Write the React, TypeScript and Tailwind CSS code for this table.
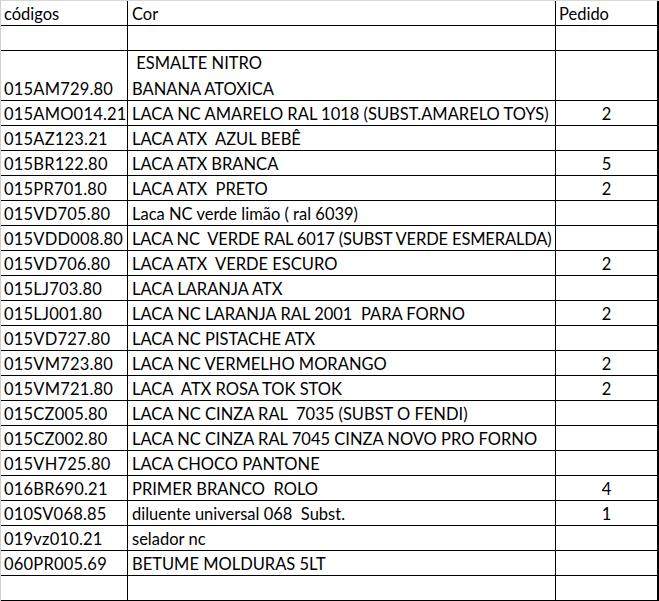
import React from "react";

type Row = { c: string; d: React.ReactNode; p?: string; h?: string; t?: string };

const rows: Row[] = [
  { c: "", d: "" },
  {
    c: "015AM729.80",
    d: (
      <div className="flex flex-col">
        <span className="whitespace-pre leading-[32px]"> ESMALTE NITRO</span>
        <span className="leading-[20px]">BANANA ATOXICA</span>
      </div>
    ),
    h: "h-[50px]",
  },
  { c: "015AMO014.21", d: "LACA NC AMARELO RAL 1018 (SUBST.AMARELO TOYS)", p: "2" },
  { c: "015AZ123.21", d: "LACA ATX  AZUL BEBÊ" },
  { c: "015BR122.80", d: "LACA ATX BRANCA", p: "5" },
  { c: "015PR701.80", d: "LACA ATX  PRETO", p: "2" },
  { c: "015VD705.80", d: "Laca NC verde limão ( ral 6039)" },
  { c: "015VDD008.80", d: "LACA NC  VERDE RAL 6017 (SUBST VERDE ESMERALDA)", t: "tracking-[-0.15px]" },
  { c: "015VD706.80", d: "LACA ATX  VERDE ESCURO", p: "2" },
  { c: "015LJ703.80", d: "LACA LARANJA ATX" },
  { c: "015LJ001.80", d: "LACA NC LARANJA RAL 2001  PARA FORNO", p: "2" },
  { c: "015VD727.80", d: "LACA NC PISTACHE ATX" },
  { c: "015VM723.80", d: "LACA NC VERMELHO MORANGO", p: "2" },
  { c: "015VM721.80", d: "LACA  ATX ROSA TOK STOK", p: "2" },
  { c: "015CZ005.80", d: "LACA NC CINZA RAL  7035 (SUBST O FENDI)" },
  { c: "015CZ002.80", d: "LACA NC CINZA RAL 7045 CINZA NOVO PRO FORNO" },
  { c: "015VH725.80", d: "LACA CHOCO PANTONE" },
  { c: "016BR690.21", d: "PRIMER BRANCO  ROLO", p: "4" },
  { c: "010SV068.85", d: "diluente universal 068  Subst.", p: "1" },
  { c: "019vz010.21", d: "selador nc" },
  { c: "060PR005.69", d: "BETUME MOLDURAS 5LT" },
  { c: "", d: "" },
];

export default function App() {
  return (
    <div
      className="w-[659px] h-[601px] bg-white text-black overflow-hidden"
      style={{ fontFamily: "Lato, 'Open Sans', sans-serif" }}
    >
      <div className="flex flex-col border-l border-l-[#d0d0d0] text-[16.5px] leading-[20px]">
        <div className="flex h-[26px] border-t border-t-[#d8d8d8] border-b border-b-black">
          <div className="w-[127px] border-r border-black pl-[3px] flex items-end pb-[1px]">códigos</div>
          <div className="w-[428px] border-r border-black pl-[4px] flex items-end pb-[1px]">Cor</div>
          <div className="w-[103px] border-r-2 border-black pl-[3px] flex items-end pb-[1px]">Pedido</div>
        </div>
        {rows.map((r, i) => (
          <div key={i} className={`flex ${r.h ?? "h-[25px]"} border-b border-black`}>
            <div className="w-[127px] border-r border-black pl-[3px] flex items-end pb-[1px] whitespace-pre tracking-[0.2px]">{r.c}</div>
            <div className={`w-[428px] border-r border-black pl-[4px] flex items-end pb-[1px] whitespace-pre ${r.t ?? ""}`}>{r.d}</div>
            <div className="w-[103px] border-r-2 border-black flex items-end justify-center pb-[1px]">{r.p ?? ""}</div>
          </div>
        ))}
      </div>
    </div>
  );
}
